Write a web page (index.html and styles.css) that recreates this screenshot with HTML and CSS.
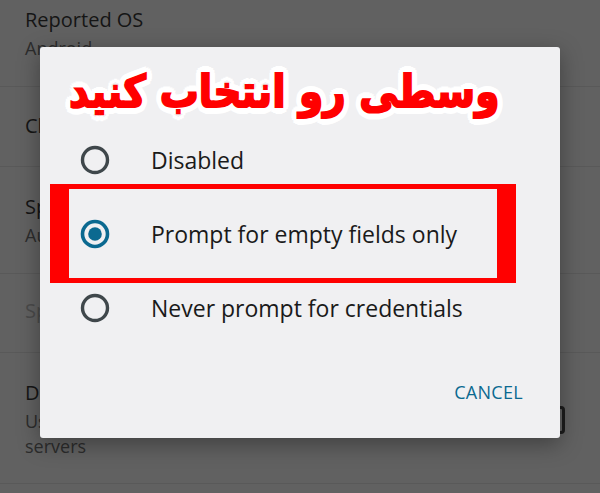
FILE: index.html
```html
<!DOCTYPE html>
<html lang="en">
<head>
<meta charset="utf-8">
<title>Autofill prompt</title>
<link rel="stylesheet" href="styles.css">
</head>
<body>
<div class="screen">
  <div class="list">
    <div class="item">
      <div class="item-text">
        <div class="item-title">Reported OS</div>
        <div class="item-summary">Android</div>
      </div>
    </div>
    <div class="item item-single">
      <div class="item-text">
        <div class="item-title">Clip</div>
      </div>
    </div>
    <div class="item">
      <div class="item-text">
        <div class="item-title">Speed dial</div>
        <div class="item-summary">Automatic</div>
      </div>
    </div>
    <div class="item item-single item-disabled">
      <div class="item-text">
        <div class="item-title">Split tunnel</div>
      </div>
    </div>
    <div class="item item-last">
      <div class="item-text">
        <div class="item-title">DNS over HTTPS</div>
        <div class="item-summary">Use secure lookups for<br>servers</div>
      </div>
      <div class="checkbox"></div>
    </div>
  </div>

  <div class="dialog">
    <div class="dialog-title">
      <span class="annotation" lang="fa" dir="rtl">وسطی رو انتخاب کنید</span>
    </div>
    <div class="options">
      <div class="option">
        <svg class="radio" viewBox="0 0 30 30" width="30" height="30"><circle cx="15" cy="15" r="12.5" fill="none" stroke="#3f474b" stroke-width="3.4"/></svg>
        <span class="option-label">Disabled</span>
      </div>
      <div class="option">
        <svg class="radio" viewBox="0 0 30 30" width="30" height="30"><circle cx="15" cy="15" r="12.5" fill="none" stroke="#0b6990" stroke-width="3.6"/><circle cx="15" cy="15" r="6.8" fill="#0b6990"/></svg>
        <span class="option-label">Prompt for empty fields only</span>
      </div>
      <div class="option">
        <svg class="radio" viewBox="0 0 30 30" width="30" height="30"><circle cx="15" cy="15" r="12.5" fill="none" stroke="#3f474b" stroke-width="3.4"/></svg>
        <span class="option-label">Never prompt for credentials</span>
      </div>
    </div>
    <div class="actions">
      <span class="btn">CANCEL</span>
    </div>
    <div class="highlight"></div>
  </div>
</div>
</body>
</html>
```
FILE: styles.css
```css
* { box-sizing: border-box; }
html, body { margin: 0; padding: 0; }
body {
  width: 600px;
  height: 493px;
  overflow: hidden;
  font-family: "Open Sans", "DejaVu Sans", sans-serif;
}
.screen {
  position: relative;
  width: 600px;
  height: 493px;
  background: #616161;
  overflow: hidden;
}
.list { margin-top: -20px; }
.item {
  display: flex;
  align-items: center;
  justify-content: space-between;
  padding: 27px 35px 25px 25px;
  border-bottom: 1px solid #595959;
}
.item-single { padding-top: 26px; padding-bottom: 27px; }
.item-disabled { padding-top: 24px; padding-bottom: 28px; }
.item-last { padding-bottom: 24px; }
.item-title {
  font-size: 20px;
  line-height: 26px;
  color: #151515;
  white-space: nowrap;
}
.item-summary {
  margin-top: 3px;
  font-size: 18px;
  line-height: 25px;
  color: #2c2c2c;
  white-space: nowrap;
}
.item-disabled .item-title { color: #4a4a4a; }
.checkbox {
  width: 28px;
  height: 28px;
  border: 3px solid #1c1c1c;
  border-radius: 4px;
}

.dialog {
  position: absolute;
  left: 40px;
  top: 47px;
  width: 520px;
  height: 391px;
  background: #f0f0f2;
  border-radius: 3px;
  box-shadow: 0 6px 22px rgba(0,0,0,0.35);
  display: flex;
  flex-direction: column;
}
.dialog-title {
  height: 76px;
  padding-left: 29px;
  padding-top: 22px;
}
.annotation {
  display: inline-block;
  font-family: "DejaVu Sans", sans-serif;
  font-weight: bold;
  font-size: 39px;
  line-height: 46px;
  color: #ff0000;
  -webkit-text-stroke: 1.8px #ff0000;
  transform: scaleY(1.14);
  text-shadow:
    6px 0 0 #fff, -6px 0 0 #fff, 0 6px 0 #fff, 0 -6px 0 #fff,
    4.2px 4.2px 0 #fff, -4.2px 4.2px 0 #fff, 4.2px -4.2px 0 #fff, -4.2px -4.2px 0 #fff,
    5.5px 2.3px 0 #fff, -5.5px 2.3px 0 #fff, 5.5px -2.3px 0 #fff, -5.5px -2.3px 0 #fff,
    2.3px 5.5px 0 #fff, -2.3px 5.5px 0 #fff, 2.3px -5.5px 0 #fff, -2.3px -5.5px 0 #fff;
}
.options { display: flex; flex-direction: column; }
.option {
  height: 74px;
  display: flex;
  align-items: center;
  padding-left: 40px;
}
.radio { flex: none; display: block; }
.option-label {
  margin-left: 41px;
  font-size: 23px;
  line-height: 32px;
  color: #1a1a1a;
  white-space: nowrap;
}
.actions {
  display: flex;
  justify-content: flex-end;
  padding-right: 37px;
  margin-top: 37px;
}
.btn {
  font-size: 18px;
  line-height: 20px;
  color: #0b6990;
  letter-spacing: 0.3px;
}
.highlight {
  position: absolute;
  left: 10px;
  top: 137px;
  width: 466px;
  height: 99px;
  border-style: solid;
  border-color: #ff0000;
  border-width: 5px 19px;
}
```
